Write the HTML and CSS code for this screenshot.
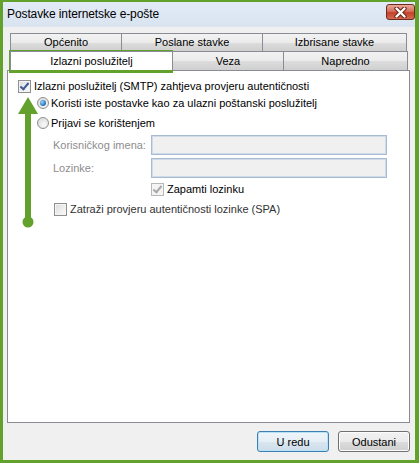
FILE: index.html
```html
<!DOCTYPE html>
<html lang="hr">
<head>
  <meta charset="UTF-8" />
  <title>Postavke internetske e-pošte</title>
  <link rel="stylesheet" href="styles.css">
</head>
<body>
  <div class="window">
    <div class="titlebar">
      <span class="title">Postavke internetske e-pošte</span>
      <button class="close" aria-label="Zatvori">
        <svg width="17" height="11" viewBox="0 0 17 11">
          <path d="M4.5 1.5 L12.5 9.5 M12.5 1.5 L4.5 9.5" stroke="#6b2418" stroke-width="4.4" stroke-linecap="round"/>
          <path d="M4.5 1.5 L12.5 9.5 M12.5 1.5 L4.5 9.5" stroke="#fff" stroke-width="2.4" stroke-linecap="round"/>
        </svg>
      </button>
    </div>

    <div class="client">
      <div class="tabs">
        <div class="tab-row">
          <div class="tab t-opc">Općenito</div>
          <div class="tab t-pos">Poslane stavke</div>
          <div class="tab t-izb">Izbrisane stavke</div>
        </div>
        <div class="tab-row">
          <div class="tab t-izl active">Izlazni poslužitelj</div>
          <div class="tab t-vez">Veza</div>
          <div class="tab t-nap">Napredno</div>
        </div>
      </div>

      <div class="panel">
        <div class="row r-auth">
          <span class="check checked"></span>
          <span>Izlazni poslužitelj (SMTP) zahtjeva provjeru autentičnosti</span>
        </div>
        <div class="row r-radio">
          <span class="radio on"></span>
          <span>Koristi iste postavke kao za ulazni poštanski poslužitelj</span>
        </div>
        <div class="row r-radio r-login">
          <span class="radio"></span>
          <span>Prijavi se korištenjem</span>
        </div>
        <div class="row r-field">
          <span class="field-label">Korisničkog imena:</span>
          <span class="input"></span>
        </div>
        <div class="row r-field r-pass">
          <span class="field-label">Lozinke:</span>
          <span class="input"></span>
        </div>
        <div class="row r-remember">
          <span class="check checked disabled"></span>
          <span>Zapamti lozinku</span>
        </div>
        <div class="row r-spa">
          <span class="check"></span>
          <span>Zatraži provjeru autentičnosti lozinke (SPA)</span>
        </div>
      </div>

      <div class="buttons">
        <button class="btn default">U redu</button>
        <button class="btn">Odustani</button>
      </div>
    </div>

    <div class="highlight"></div>
    <svg class="arrow" width="24" height="135" viewBox="0 0 24 135">
      <path d="M11 0 L1 17 L8 17 L8 125 L14 125 L14 17 L21 17 Z" fill="#62a22c"/>
      <circle cx="11" cy="125" r="5.5" fill="#62a22c"/>
    </svg>
  </div>
</body>
</html>
```

FILE: styles.css
```css
body {
  margin: 0;
  background: #fff;
  font-family: "Liberation Sans", Arial, sans-serif;
  font-size: 11px;
  color: #000;
}
.window {
  position: relative;
  width: 419px;
  height: 463px;
  box-sizing: border-box;
  border: 3px solid #62a22c;
  border-top-width: 2px;
  border-right-width: 4px;
  background: #dbe6f2;
  display: flex;
  flex-direction: column;
}
.titlebar {
  height: 25px;
  display: flex;
  align-items: flex-start;
  justify-content: space-between;
  background: linear-gradient(#e2ebf6, #d9e4f0);
}
.title {
  margin: 5px 0 0 4px;
  font-size: 12px;
  letter-spacing: -0.1px;
}
.close {
  margin-top: 2px;
  width: 29px;
  height: 16px;
  padding: 0;
  border: 1px solid #6e2b20;
  border-radius: 3px;
  background: linear-gradient(#e9a99a, #d4705e 45%, #c4422c 55%, #d3694f);
  display: flex;
  align-items: center;
  justify-content: center;
}
.client {
  flex: 1;
  background: #f0f0f0;
  padding: 6px 5px 0 4px;
  display: flex;
  flex-direction: column;
}
.tabs {
  margin-left: 3px;
}
.tab-row {
  display: flex;
}
.tab {
  box-sizing: border-box;
  height: 18px;
  border: 1px solid #898c95;
  border-bottom: none;
  margin-right: -1px;
  background: linear-gradient(#f2f2f2, #ebebeb 50%, #dddddd 51%, #cfcfcf);
  text-align: center;
  line-height: 17px;
}
.tab-row + .tab-row .tab {
  height: 19px;
  line-height: 19px;
}
.t-opc { width: 112px; }
.t-pos { width: 142px; }
.t-izb { width: 145px; }
.t-izl { width: 163px; }
.t-vez { width: 112px; }
.t-nap { width: 125px; }
.tab.active {
  background: #fff;
  position: relative;
  z-index: 1;
  height: 20px;
  margin-bottom: -1px;
  line-height: 17px;
}
.panel {
  height: 353px;
  box-sizing: border-box;
  border: 1px solid #898c95;
  background: #fff;
  padding-top: 7px;
}
.row {
  display: flex;
  align-items: center;
  height: 16px;
  white-space: nowrap;
}
.r-auth { padding-left: 10px; gap: 3px; }
.r-radio { padding-left: 29px; gap: 2px; margin-top: 1px; }
.r-login { margin-top: 4px; }
.r-field {
  height: 20px;
  padding-left: 45px;
  margin-top: 4px;
}
.r-pass { margin-top: 3px; }
.field-label {
  width: 98px;
  color: #8d8d8d;
}
.input {
  width: 236px;
  height: 20px;
  box-sizing: border-box;
  border: 1px solid #a9bbd3;
  box-shadow: inset 0 0 0 1px #d0dbe8;
  background: #f0f0f0;
}
.r-remember { padding-left: 143px; gap: 3px; margin-top: 3px; }
.r-spa { padding-left: 46px; gap: 3px; margin-top: 4px; color: #333; }

.check {
  width: 13px;
  height: 13px;
  box-sizing: border-box;
  border: 1px solid #8e8f8f;
  background: linear-gradient(135deg, #dcdcdc, #fbfbfb);
  box-shadow: inset 0 0 0 1px #f4f4f4;
  flex: none;
  position: relative;
}
.check.checked::after {
  content: "";
  position: absolute;
  left: 3px;
  top: 0px;
  width: 3px;
  height: 7px;
  border: solid #3d5a98;
  border-width: 0 2px 2px 0;
  transform: rotate(40deg);
}
.check.disabled {
  border-color: #b8b8b8;
  background: #f4f4f4;
}
.check.disabled::after {
  border-color: #a8a8a8;
}
.radio {
  width: 12px;
  height: 12px;
  box-sizing: border-box;
  border-radius: 50%;
  border: 1px solid #8e8f8f;
  background: radial-gradient(circle at 60% 65%, #fafafa, #d4d4d4);
  flex: none;
  position: relative;
}
.radio.on::after {
  content: "";
  position: absolute;
  left: 2px;
  top: 2px;
  width: 6px;
  height: 6px;
  border-radius: 50%;
  background: radial-gradient(circle at 35% 35%, #9fd3f7, #2a7bc0 60%, #15507f);
}
.buttons {
  display: flex;
  justify-content: flex-end;
  gap: 9px;
  margin-top: 8px;
}
.btn {
  width: 72px;
  height: 21px;
  padding: 0;
  font-family: inherit;
  font-size: 11px;
  color: #000;
  border: 1px solid #707070;
  border-radius: 3px;
  background: linear-gradient(#f2f2f2, #ebebeb 50%, #dddddd 51%, #cfcfcf);
  box-shadow: inset 0 0 0 1px #fcfcfc;
}
.btn.default {
  border-color: #3c7fb1;
  background: linear-gradient(#eef5fa, #e6eff6 50%, #d9e6ef 51%, #cddde9);
  box-shadow: inset 0 0 0 1px #b6e3f8;
}
.highlight {
  position: absolute;
  left: 6px;
  top: 48px;
  width: 164px;
  height: 23px;
  box-sizing: border-box;
  border: 3px solid #62a22c;
}
.arrow {
  position: absolute;
  left: 14px;
  top: 95px;
}
```
